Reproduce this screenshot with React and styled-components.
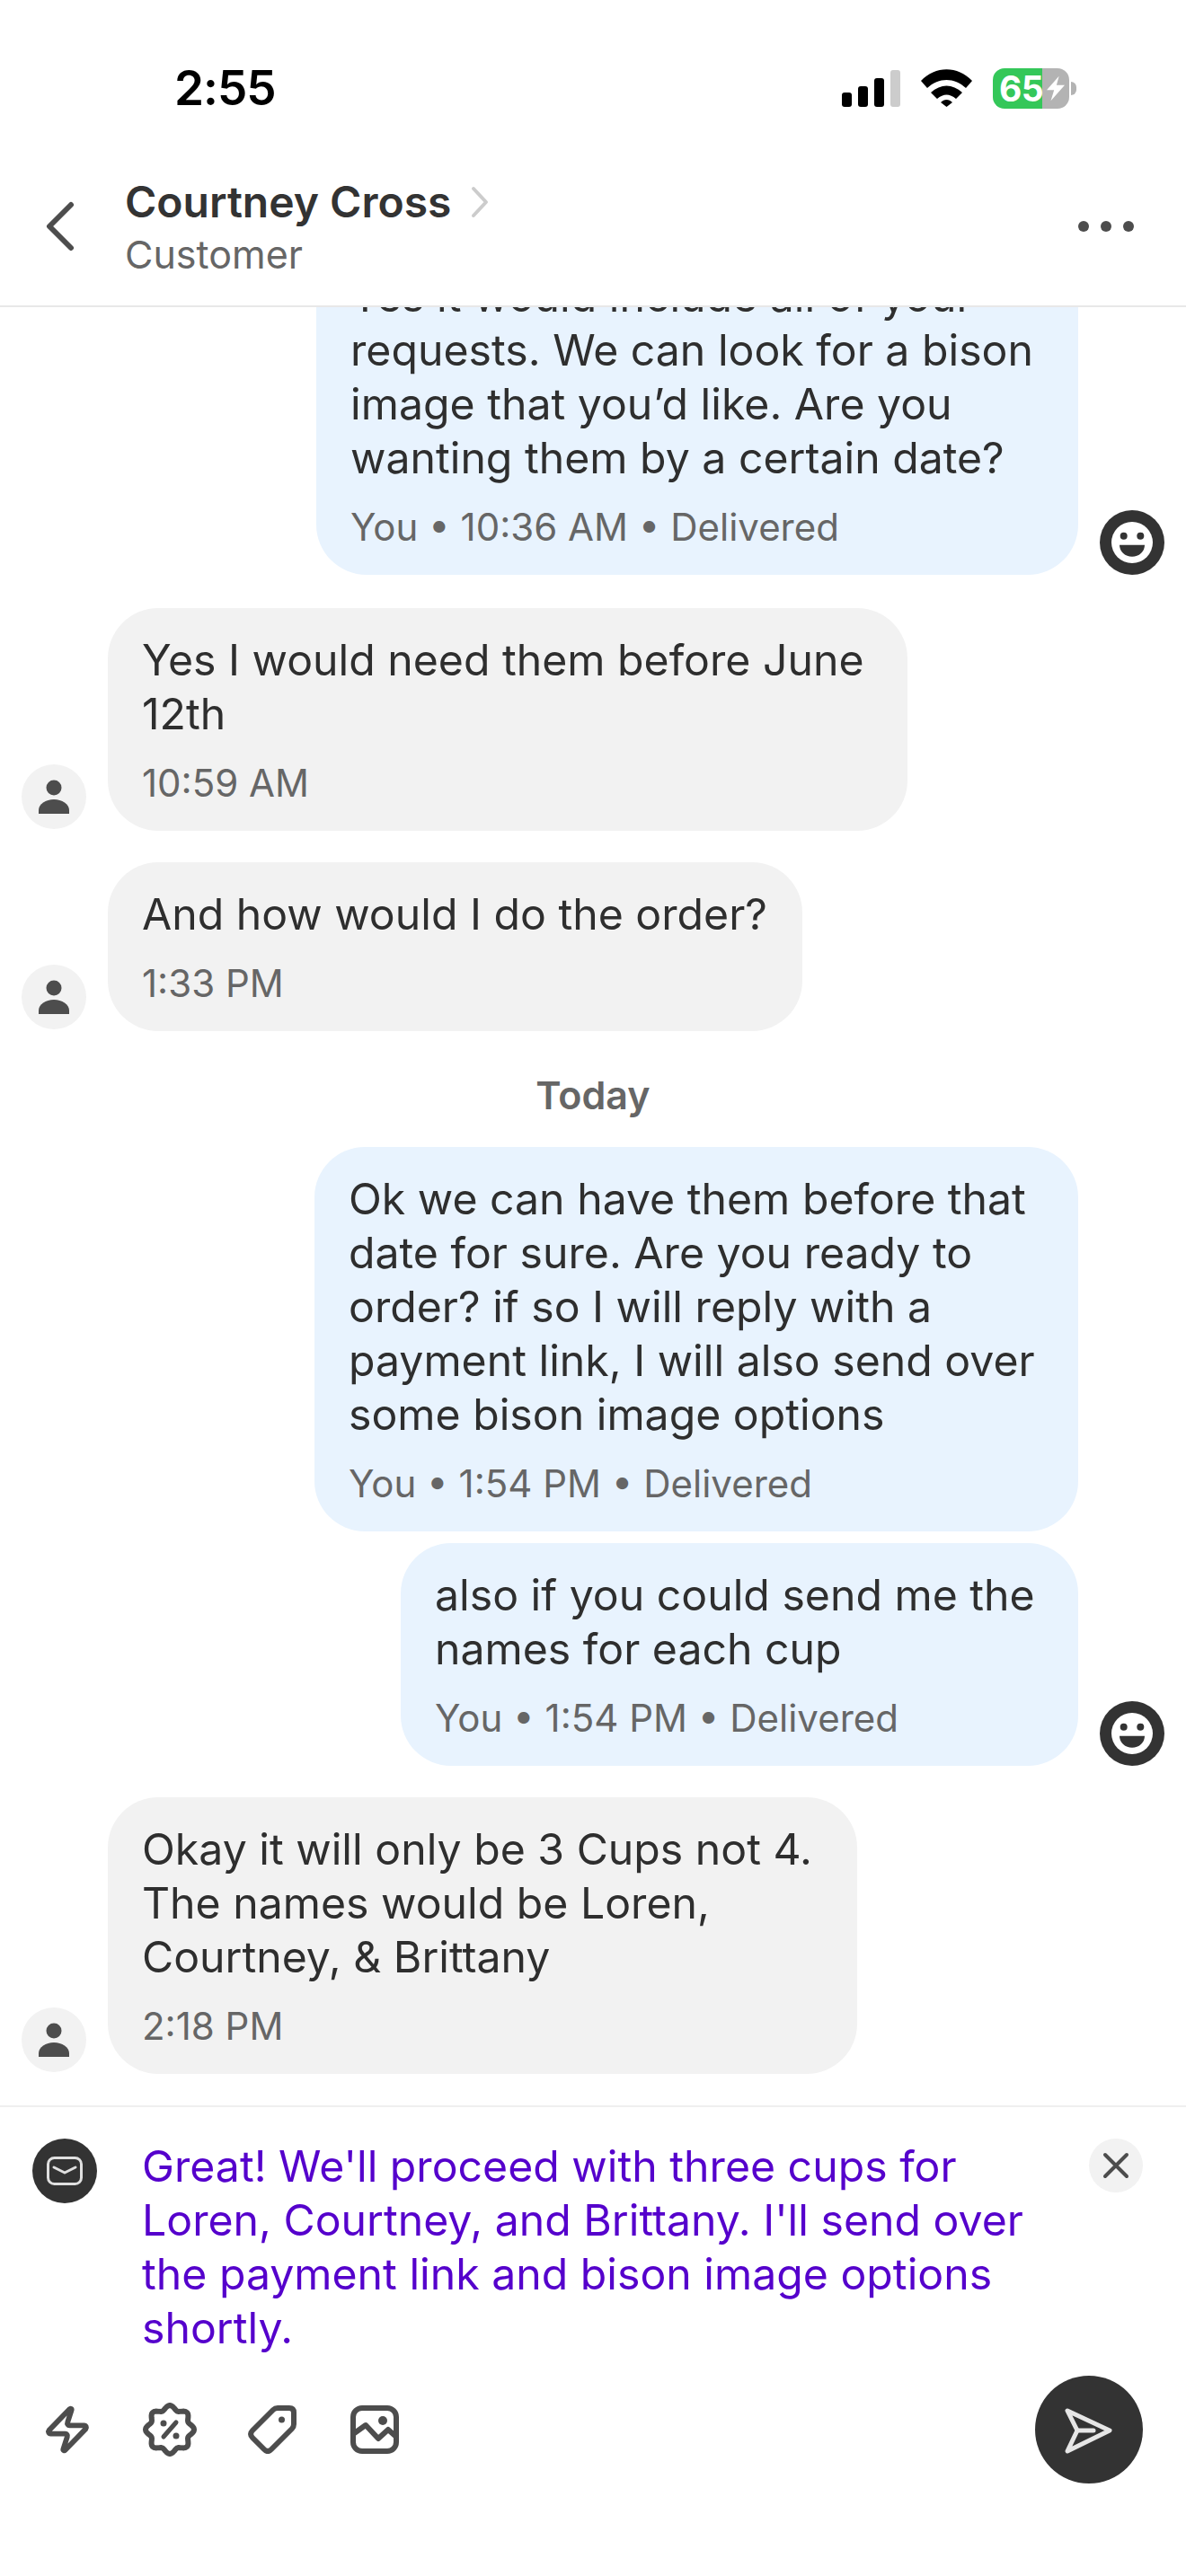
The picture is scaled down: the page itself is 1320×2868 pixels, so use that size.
import React from 'react'
import styled, { createGlobalStyle } from 'styled-components'
import { Zap } from 'lucide-react'

const Global = createGlobalStyle`
html, body { margin: 0; padding: 0; background: #fff; }
* { box-sizing: border-box; }
`

const Page = styled.div`
width: 1320px;
height: 2868px;
display: flex;
flex-direction: column;
overflow: hidden;
background: #fff;
font-family: Inter, "Liberation Sans", sans-serif;
color: #2e2e2e;
`

const StatusBar = styled.div`
flex: 0 0 196px;
display: flex;
align-items: center;
justify-content: space-between;
padding-left: 194px;
padding-right: 122px;
`

const Clock = styled.div`
font-size: 53px;
font-weight: 600;
color: #000;
letter-spacing: -1px;
`

const StatusIcons = styled.div`
display: flex;
align-items: flex-end;
gap: 23px;
padding-bottom: 2px;
`

const Signal = styled.div`
display: flex;
align-items: flex-end;
gap: 7px;
height: 41px;
`

const SignalBar = styled.div`
width: 11px;
height: ${p => p.$h}px;
border-radius: 3px;
background: ${p => (p.$off ? '#ccc' : '#000')};
`

const Battery = styled.div`
display: flex;
align-items: center;
gap: 2px;
margin-bottom: -2px;
`

const BatteryBody = styled.div`
position: relative;
width: 85px;
height: 45px;
border-radius: 13px;
background: linear-gradient(90deg, #34c759 65%, #b3b3b3 65%);
color: #fff;
font-size: 39px;
font-weight: 700;
line-height: 45px;
padding-left: 7px;
letter-spacing: -0.5px;
`

const BatteryBolt = styled.svg`
position: absolute;
left: 60px;
top: 8px;
`

const BatteryNub = styled.div`
width: 6px;
height: 15px;
border-radius: 0 8px 8px 0;
background: #b3b3b3;
`

const Header = styled.div`
flex: 0 0 146px;
display: flex;
align-items: flex-start;
padding: 0 58px 0 50px;
border-bottom: 2px solid #e8e8e8;
`

const BackIcon = styled.svg`
flex: none;
margin-top: 28px;
margin-right: 55px;
`

const Contact = styled.div`
flex: 1;
`

const NameRow = styled.div`
display: flex;
align-items: center;
gap: 22px;
font-size: 48px;
font-weight: 600;
line-height: 58px;
color: #333;
`

const Role = styled.div`
font-size: 43px;
line-height: 58px;
color: #666;
`

const Dots = styled.div`
display: flex;
gap: 13px;
margin-top: 50px;
`

const Dot = styled.div`
width: 12px;
height: 12px;
border-radius: 50%;
background: #4d4d4d;
`

const Thread = styled.div`
flex: 1;
min-height: 0;
display: flex;
flex-direction: column;
justify-content: flex-end;
overflow: hidden;
padding-bottom: 35px;
`

const Row = styled.div`
flex: none;
display: flex;
align-items: flex-end;
justify-content: ${p => (p.$mine ? 'flex-end' : 'flex-start')};
padding: 0 24px;
gap: 24px;
margin-top: ${p => p.$gap}px;
`

const Bubble = styled.div`
flex: none;
width: ${p => p.$w}px;
padding: 28px 38px 31px;
border-radius: 56px;
background: ${p => (p.$mine ? '#e8f3fe' : '#f2f2f2')};
`

const Body = styled.div`
font-size: 48.2px;
line-height: 60px;
color: #2e2e2e;
white-space: pre-line;
`

const Meta = styled.div`
margin-top: 25px;
font-size: 42px;
line-height: 44px;
color: #666;
`

const AvatarSlot = styled.div`
flex: 0 0 72px;
height: 72px;
margin-bottom: ${p => (p.$mine ? 0 : 2)}px;
`

const DayLabel = styled.div`
flex: none;
margin-top: 41px;
margin-bottom: 28px;
height: 60px;
text-align: center;
font-size: 43px;
font-weight: 600;
line-height: 60px;
color: #666;
`

const Composer = styled.div`
flex: none;
height: 524px;
border-top: 2px solid #efefef;
display: flex;
flex-direction: column;
`

const Draft = styled.div`
display: flex;
align-items: flex-start;
padding: 35px 48px 0 36px;
`

const MailBadge = styled.div`
flex: 0 0 72px;
height: 72px;
border-radius: 50%;
background: #333;
display: flex;
align-items: center;
justify-content: center;
margin-right: 50px;
`

const DraftText = styled.div`
flex: 1;
font-size: 48.2px;
line-height: 60px;
color: #5500cc;
margin-top: 1px;
margin-right: 54px;
`

const CloseButton = styled.div`
flex: 0 0 60px;
height: 60px;
border-radius: 50%;
background: #f2f2f2;
display: flex;
align-items: center;
justify-content: center;
`

const Toolbar = styled.div`
display: flex;
align-items: center;
padding: 0 48px 0 39px;
margin-top: 23px;
`

const Tools = styled.div`
flex: 1;
display: flex;
gap: 42px;
`

const Tool = styled.div`
flex: 0 0 72px;
height: 72px;
display: flex;
align-items: center;
justify-content: center;
color: #4d4d4d;
`

const SendButton = styled.div`
flex: 0 0 120px;
height: 120px;
border-radius: 50%;
background: #333;
display: flex;
align-items: center;
justify-content: center;
`

const Wifi = () => (
    <svg width="57" height="42" viewBox="0 0 57 42" fill="#000">
        <path d="M0 13C16-4 41-4 57 13L50 21C37 9 20 9 7 21Z" />
        <path d="M11 26C22 16 35 16 46 26L39 33C32 27 25 27 18 33Z" />
        <path d="M22 37C26 33 31 33 35 37L28.5 42Z" />
    </svg>
)

const Smiley = () => (
    <svg width="72" height="72" viewBox="0 0 72 72">
        <circle cx="36" cy="36" r="36" fill="#333" />
        <circle cx="36" cy="36" r="23" fill="#fff" />
        <circle cx="26.7" cy="28.7" r="4" fill="#333" />
        <circle cx="45.3" cy="28.7" r="4" fill="#333" />
        <path d="M22 38.7H50A14 13 0 0 1 22 38.7Z" fill="#333" />
    </svg>
)

const Person = () => (
    <svg width="72" height="72" viewBox="0 0 72 72">
        <circle cx="36" cy="36" r="36" fill="#f2f2f2" />
        <circle cx="36" cy="26" r="8.5" fill="#4d4d4d" />
        <path d="M19 55V51C19 44 27 39 36 39S53 44 53 51V55Z" fill="#4d4d4d" />
    </svg>
)

// wavy outline of the discount badge, 8 lobes round the centre
const badgePath = () => {
    const pts = []
    for (let i = 0; i < 96; i++) {
        const a = (i / 96) * Math.PI * 2 - Math.PI / 2
        const r = 24.5 + 2.5 * Math.cos(8 * (a + Math.PI / 2))
        pts.push(`${(30 + r * Math.cos(a)).toFixed(2)} ${(30 + r * Math.sin(a)).toFixed(2)}`)
    }
    return 'M' + pts.join('L') + 'Z'
}

const Badge = () => (
    <svg width="60" height="60" viewBox="0 0 60 60" fill="none" stroke="currentColor" strokeWidth="6" strokeLinecap="round" strokeLinejoin="round">
        <path d={badgePath()} />
        <path d="M23 38L37 22" strokeWidth="5" />
        <circle cx="23" cy="23" r="3.5" fill="currentColor" stroke="none" />
        <circle cx="37" cy="37" r="3.5" fill="currentColor" stroke="none" />
    </svg>
)

const messages = [
    { mine: true, w: 848, gap: 0, text: 'Yes it would include all of your\nrequests. We can look for a bison\nimage that you’d like. Are you\nwanting them by a certain date?', meta: 'You • 10:36 AM • Delivered', avatar: true },
    { mine: false, w: 890, gap: 37, text: 'Yes I would need them before June\n12th', meta: '10:59 AM', avatar: true },
    { mine: false, w: 773, gap: 35, text: 'And how would I do the order?', meta: '1:33 PM', avatar: true },
    { day: 'Today' },
    { mine: true, w: 850, gap: 0, text: 'Ok we can have them before that\ndate for sure. Are you ready to\norder? if so I will reply with a\npayment link, I will also send over\nsome bison image options', meta: 'You • 1:54 PM • Delivered' },
    { mine: true, w: 754, gap: 13, text: 'also if you could send me the\nnames for each cup', meta: 'You • 1:54 PM • Delivered', avatar: true },
    { mine: false, w: 834, gap: 35, text: 'Okay it will only be 3 Cups not 4.\nThe names would be Loren,\nCourtney, & Brittany', meta: '2:18 PM', avatar: true },
]

const Message = ({ m }) => {
    const slot = <AvatarSlot $mine={m.mine}>{m.avatar && (m.mine ? <Smiley /> : <Person />)}</AvatarSlot>
    return <Row $mine={m.mine} $gap={m.gap}>
        {!m.mine && slot}
        <Bubble $mine={m.mine} $w={m.w}>
            <Body>{m.text}</Body>
            <Meta>{m.meta}</Meta>
        </Bubble>
        {m.mine && slot}
    </Row>
}

const App = () => {
    return <Page>
        <Global />
        <StatusBar>
            <Clock>2:55</Clock>
            <StatusIcons>
                <Signal>
                    <SignalBar $h={16} />
                    <SignalBar $h={23} />
                    <SignalBar $h={32} />
                    <SignalBar $h={41} $off />
                </Signal>
                <Wifi />
                <Battery>
                    <BatteryBody>
                        65
                        <BatteryBolt width="20" height="29" viewBox="0 0 22 30" fill="#fff">
                            <path d="M15 0L0 17H9L5 30L22 11H12Z" />
                        </BatteryBolt>
                    </BatteryBody>
                    <BatteryNub />
                </Battery>
            </StatusIcons>
        </StatusBar>
        <Header>
            <BackIcon width="34" height="56" viewBox="0 0 34 56" fill="none" stroke="#4d4d4d" strokeWidth="6" strokeLinecap="round" strokeLinejoin="round">
                <path d="M29 4L5 28L29 52" />
            </BackIcon>
            <Contact>
                <NameRow>
                    Courtney Cross
                    <svg width="20" height="36" viewBox="0 0 20 36" fill="none" stroke="#ccc" strokeWidth="4" strokeLinecap="round" strokeLinejoin="round">
                        <path d="M3 3L17 18L3 33" />
                    </svg>
                </NameRow>
                <Role>Customer</Role>
            </Contact>
            <Dots><Dot /><Dot /><Dot /></Dots>
        </Header>
        <Thread>
            {messages.map((m, i) => m.day
                ? <DayLabel key={i}>{m.day}</DayLabel>
                : <Message key={i} m={m} />)}
        </Thread>
        <Composer>
            <Draft>
                <MailBadge>
                    <svg width="40" height="32" viewBox="0 0 40 32" fill="none" stroke="#e0e0e0" strokeWidth="3" strokeLinecap="round" strokeLinejoin="round">
                        <rect x="1.5" y="1.5" width="37" height="29" rx="7" />
                        <path d="M8 12L20 18L32 12" />
                    </svg>
                </MailBadge>
                <DraftText>Great! We'll proceed with three cups for Loren, Courtney, and Brittany. I'll send over the payment link and bison image options shortly.</DraftText>
                <CloseButton>
                    <svg width="30" height="30" viewBox="0 0 30 30" fill="none" stroke="#4d4d4d" strokeWidth="4" strokeLinecap="round">
                        <path d="M3 3L27 27M27 3L3 27" />
                    </svg>
                </CloseButton>
            </Draft>
            <Toolbar>
                <Tools>
                    <Tool><Zap size={56} strokeWidth={2.5} /></Tool>
                    <Tool><Badge /></Tool>
                    <Tool>
                        <svg width="54" height="54" viewBox="0 0 54 54" fill="none" stroke="currentColor" strokeWidth="6" strokeLinejoin="round">
                            <path d="M33 3H46Q51 3 51 8V21Q51 24 49 26L26 49Q22 53 18 49L5 36Q1 32 5 28L28 5Q30 3 33 3Z" />
                            <circle cx="37.5" cy="16" r="3.5" fill="currentColor" stroke="none" />
                        </svg>
                    </Tool>
                    <Tool>
                        <svg width="54" height="54" viewBox="0 0 54 54" fill="none" stroke="currentColor" strokeWidth="6" strokeLinejoin="round" strokeLinecap="round">
                            <rect x="3" y="3" width="48" height="48" rx="10" />
                            <path d="M3 32L17 22L31 37L42 27L51 35" />
                            <circle cx="36" cy="17" r="5" fill="currentColor" stroke="none" />
                        </svg>
                    </Tool>
                </Tools>
                <SendButton>
                    <svg width="60" height="60" viewBox="0 0 60 60" fill="none" stroke="#e6e6e6" strokeWidth="5" strokeLinecap="round" strokeLinejoin="round">
                        <path d="M6 9L53 31L6 54L17 31Z" />
                        <path d="M17 31H35" />
                    </svg>
                </SendButton>
            </Toolbar>
        </Composer>
    </Page>
}

export default App
